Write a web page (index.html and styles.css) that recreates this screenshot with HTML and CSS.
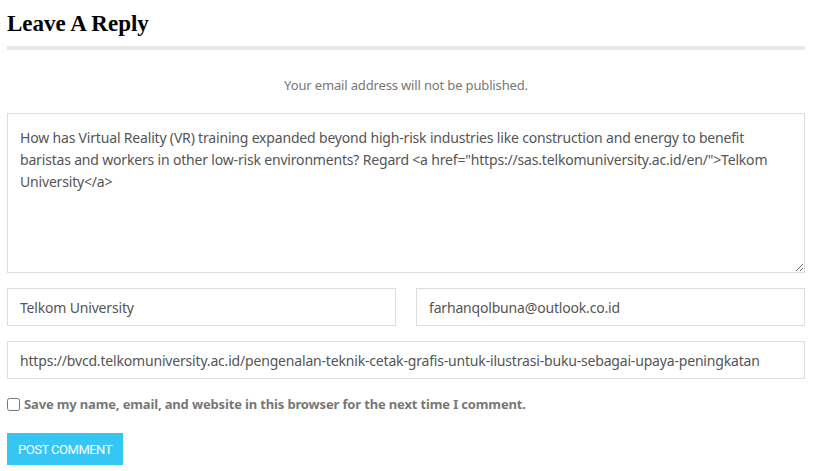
FILE: index.html
```html
<!DOCTYPE html>
<html>
<head>
<meta charset="utf-8">
<link rel="stylesheet" href="styles.css">
</head>
<body>
<div class="respond">
  <h3 class="reply-title">Leave A Reply</h3>
  <form class="comment-form">
    <p class="notes">Your email address will not be published.</p>
    <textarea class="comment-box">How has Virtual Reality (VR) training expanded beyond high-risk industries like construction and energy to benefit baristas and workers in other low-risk environments? Regard &lt;a href="https://sas.telkomuniversity.ac.id/en/"&gt;Telkom University&lt;/a&gt;</textarea>
    <div class="row">
      <input class="field" type="text" value="Telkom University">
      <input class="field" type="text" value="farhanqolbuna@outlook.co.id">
    </div>
    <input class="field wide" type="text" value="https://bvcd.telkomuniversity.ac.id/pengenalan-teknik-cetak-grafis-untuk-ilustrasi-buku-sebagai-upaya-peningkatan">
    <label class="consent"><input type="checkbox" class="check"><span>Save my name, email, and website in this browser for the next time I comment.</span></label>
    <div><button type="button" class="submit">POST COMMENT</button></div>
  </form>
</div>
</body>
</html>
```

FILE: styles.css
```css
html, body {
  margin: 0;
  padding: 0;
  background: #fff;
}
body {
  font-family: "Noto Sans", sans-serif;
}
.respond {
  width: 798px;
  padding: 0 0 0 7px;
}
.reply-title {
  margin: 0;
  padding-top: 10px;
  font-family: "Liberation Serif", serif;
  font-weight: bold;
  font-size: 23px;
  line-height: 27px;
  color: #000;
  padding-bottom: 9px;
  border-bottom: 4px solid #e8e8e8;
}
.comment-form {
  display: flex;
  flex-direction: column;
}
.notes {
  margin: 26px 0 0;
  text-align: center;
  font-size: 13px;
  line-height: 18px;
  letter-spacing: -0.15px;
  color: #777;
}
.comment-box {
  margin-top: 19px;
  box-sizing: border-box;
  width: 798px;
  height: 160px;
  border: 1px solid #ddd;
  padding: 13px 12px 12px;
  font-family: "Noto Sans", sans-serif;
  font-size: 14px;
  line-height: 22px;
  letter-spacing: -0.18px;
  color: #555;
  resize: vertical;
  outline: none;
}
.row {
  display: flex;
  gap: 20px;
  margin-top: 15px;
}
.field {
  box-sizing: border-box;
  flex: 1;
  min-width: 0;
  height: 38px;
  border: 1px solid #ddd;
  padding: 0 12px;
  font-family: "Noto Sans", sans-serif;
  font-size: 14px;
  letter-spacing: -0.18px;
  color: #555;
  outline: none;
  margin: 0;
}
.wide {
  margin-top: 15px;
  width: 798px;
  flex: none;
}
.consent {
  display: flex;
  align-items: center;
  margin-top: 16px;
  font-size: 13px;
  font-weight: bold;
  letter-spacing: -0.15px;
  color: #777;
}
.check {
  margin: 0 4px 0 0;
  width: 13px;
  height: 13px;
}
.submit {
  margin-top: 20px;
  width: 116px;
  height: 32px;
  border: none;
  background: #36c6f4;
  color: #fff;
  font-family: "Roboto", sans-serif;
  font-size: 13px;
  letter-spacing: -0.5px;
  padding: 0;
}
```
